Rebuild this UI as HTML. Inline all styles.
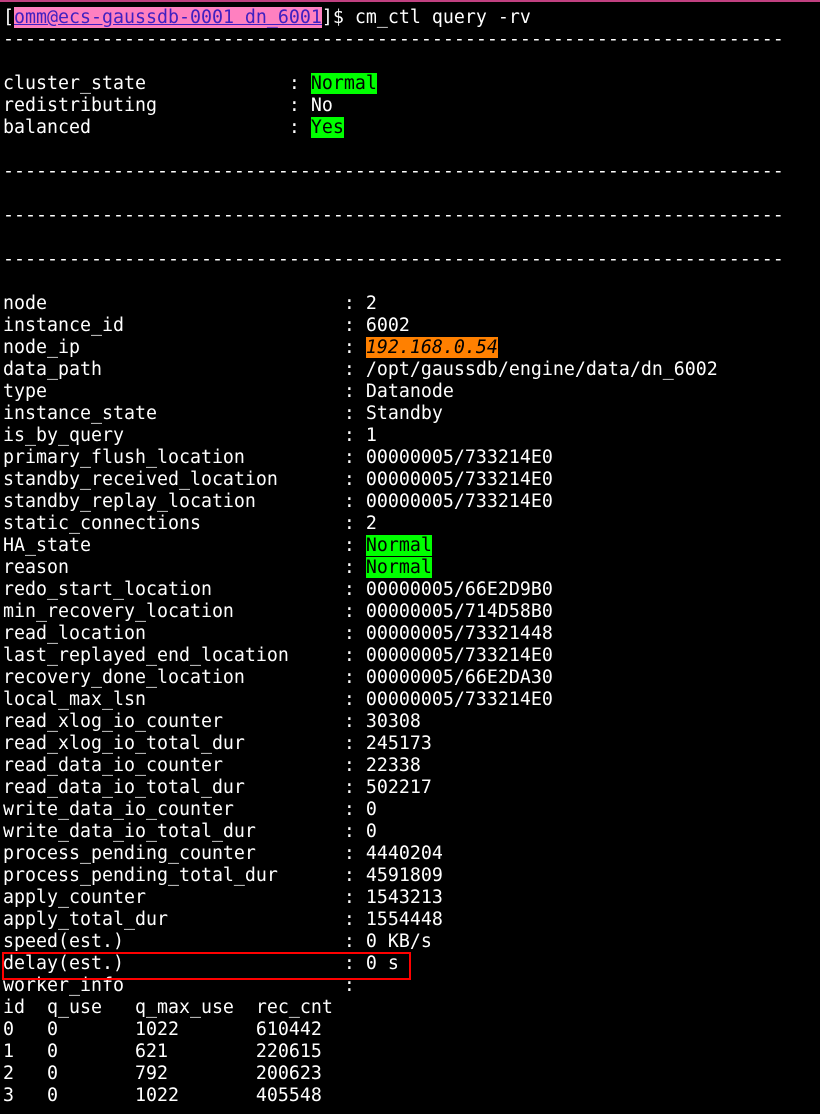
<!DOCTYPE html>
<html><head><meta charset="utf-8"><style>
html,body{margin:0;padding:0;background:#000;width:820px;height:1114px;overflow:hidden}
#t{position:absolute;left:3px;top:7px;font-family:"DejaVu Sans Mono","Liberation Mono",monospace;font-size:18.27px;line-height:22px;color:#fff;white-space:pre;margin:0}
.g{background:#00ff00;color:#000}
.o{background:#ff8000;color:#000;font-style:italic}
.p{background:#ff80c0;color:#4020c0;text-decoration:underline}
#top{position:absolute;left:0;top:0;width:820px;height:2px;background:#c04080}
#box{position:absolute;left:2px;top:952px;width:405px;height:24px;border:2px solid #ff0000}
</style></head><body>
<div id="top"></div>
<pre id="t">[<span class="p">omm@ecs-gaussdb-0001 dn_6001</span>]$ cm_ctl query -rv
-----------------------------------------------------------------------

cluster_state             : <span class="g">Normal</span>
redistributing            : No
balanced                  : <span class="g">Yes</span>

-----------------------------------------------------------------------

-----------------------------------------------------------------------

-----------------------------------------------------------------------

node                           : 2
instance_id                    : 6002
node_ip                        : <span class="o">192.168.0.54</span>
data_path                      : /opt/gaussdb/engine/data/dn_6002
type                           : Datanode
instance_state                 : Standby
is_by_query                    : 1
primary_flush_location         : 00000005/733214E0
standby_received_location      : 00000005/733214E0
standby_replay_location        : 00000005/733214E0
static_connections             : 2
HA_state                       : <span class="g">Normal</span>
reason                         : <span class="g">Normal</span>
redo_start_location            : 00000005/66E2D9B0
min_recovery_location          : 00000005/714D58B0
read_location                  : 00000005/73321448
last_replayed_end_location     : 00000005/733214E0
recovery_done_location         : 00000005/66E2DA30
local_max_lsn                  : 00000005/733214E0
read_xlog_io_counter           : 30308
read_xlog_io_total_dur         : 245173
read_data_io_counter           : 22338
read_data_io_total_dur         : 502217
write_data_io_counter          : 0
write_data_io_total_dur        : 0
process_pending_counter        : 4440204
process_pending_total_dur      : 4591809
apply_counter                  : 1543213
apply_total_dur                : 1554448
speed(est.)                    : 0 KB/s
delay(est.)                    : 0 s
worker_info                    :
id  q_use   q_max_use  rec_cnt
0   0       1022       610442
1   0       621        220615
2   0       792        200623
3   0       1022       405548
</pre>
<div id="box"></div>
</body></html>
